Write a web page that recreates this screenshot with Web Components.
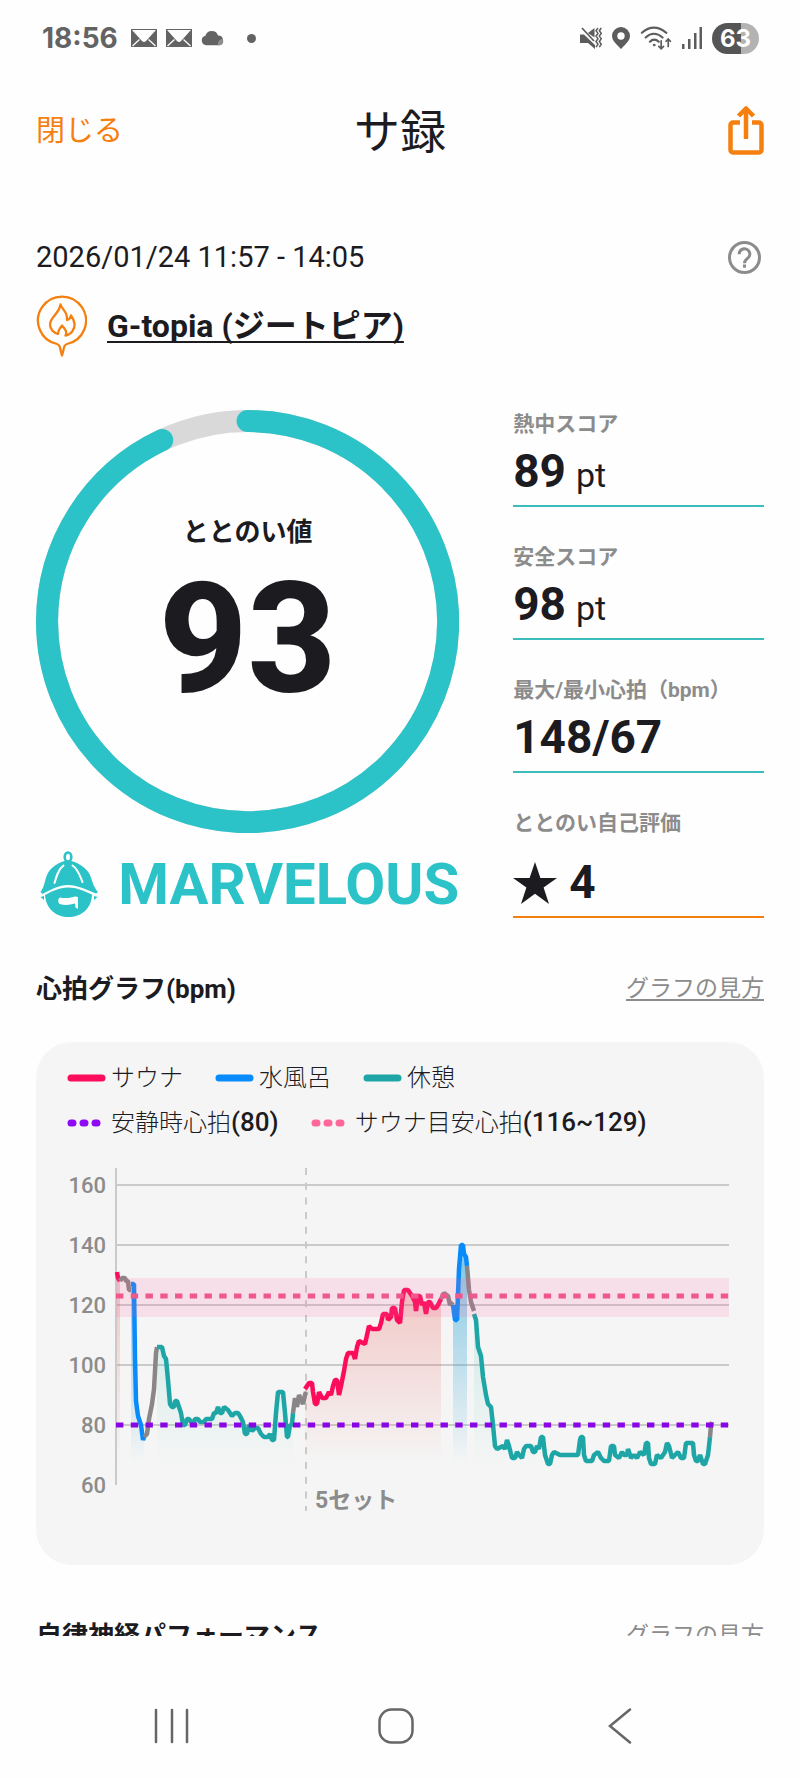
<!DOCTYPE html>
<html lang="ja">
<head>
<meta charset="utf-8">
<meta name="viewport" content="width=device-width, initial-scale=1">
<title>サ録</title>
<style>
  :root {
    --ink: #1c1b1f;
    --muted: #8c8c8c;
    --orange: #f57f0f;
    --teal: #2bc2c8;
    --card: #f5f5f5;
  }
  html, body { height: 100%; }
  body {
    margin: 0;
    background: #fefefe;
    color: var(--ink);
    font-family: Roboto, "Noto Sans CJK JP", sans-serif;
  }
</style>
</head>
<body>
<sa-app>
  <sa-status-bar slot="status" time="18:56" battery="63"></sa-status-bar>
  <sa-header slot="header" heading="サ録" close="閉じる"></sa-header>

  <sa-visit date="2026/01/24 11:57 - 14:05" href="#venue">G-topia (ジートピア)</sa-visit>

  <sa-score>
    <sa-ring slot="ring" value="93" label="ととのい値"></sa-ring>
    <sa-rank slot="ring">MARVELOUS</sa-rank>
    <sa-stat label="熱中スコア" unit="pt">89</sa-stat>
    <sa-stat label="安全スコア" unit="pt">98</sa-stat>
    <sa-stat label="最大/最小心拍（bpm）">148/67</sa-stat>
    <sa-stat label="ととのい自己評価" rating>4</sa-stat>
  </sa-score>

  <sa-section heading="心拍グラフ(bpm)" link="グラフの見方">
    <sa-card>
      <sa-legend>
        <sa-key color="#fb0d5c">サウナ</sa-key>
        <sa-key color="#0a8bfb">水風呂</sa-key>
        <sa-key color="#1ea5a6">休憩</sa-key>
      </sa-legend>
      <sa-legend>
        <sa-key color="#8f0af5" dotted>安静時心拍<b>(80)</b></sa-key>
        <sa-key color="#ff6699" dotted>サウナ目安心拍<b>(116~129)</b></sa-key>
      </sa-legend>
      <sa-chart></sa-chart>
    </sa-card>
  </sa-section>

  <sa-section heading="自律神経パフォーマンス" link="グラフの見方"></sa-section>

  <sa-nav-bar slot="nav"></sa-nav-bar>
</sa-app>

<script>
/** Base: renders `template()` into an open shadow root once connected. */
class SaElement extends HTMLElement {
  connectedCallback() {
    if (this.shadowRoot) return;
    this.attachShadow({ mode: 'open' }).innerHTML = this.template();
  }
  attr(name) {
    return this.getAttribute(name) || '';
  }
}

/** `<sa-app>` — full-height shell; the middle part is clipped above the nav. */
customElements.define('sa-app', class extends SaElement {
  template() {
    return `
<style>
  :host { display: flex; flex-direction: column; height: 100vh; }
  main { flex: 1; min-height: 0; overflow: hidden; padding: 0 36px; }
</style>
<slot name="status"></slot>
<slot name="header"></slot>
<main><slot></slot></main>
<slot name="nav"></slot>`;
  }
});

/** `<sa-status-bar time battery>` — phone status line. */
customElements.define('sa-status-bar', class extends SaElement {
  template() {
    const mail = `
<svg width="26" height="18" viewBox="0 0 26 18">
  <path fill="#636363" d="M0 0h26v18H0z"/>
  <path fill="#fefefe" d="M1 1h24L15 12q-2 2-4 0z"/>
  <path stroke="#fefefe" stroke-width="1.3" fill="none" d="M1.500 17l7-6.500M24.500 17l-7-6.500"/>
</svg>`;
    return `
<style>
  :host { display: flex; align-items: center; justify-content: space-between; height: 76px; padding: 0 41px 0 42px; color: #636363; }
  div { display: flex; align-items: center; }
  .left { gap: 9px; }
  .right { gap: 10px; }
  time { font: 700 28px/36px Inter, sans-serif; margin-right: 4px; }
  .dot { margin-left: 14px; }
  .battery {
    width: 47px; height: 31px; border-radius: 16px; justify-content: center;
    background: linear-gradient(90deg, #555 62%, #b3b3b3 62%);
    color: #fff; font: 700 24px/31px Inter, sans-serif;
  }
</style>
<div class="left">
  <time>${this.attr('time')}</time>
  ${mail}${mail}
  <svg width="23" height="16" viewBox="0 0 22 15"><path fill="#636363" d="M5 14.500a4.700 4.700 0 0 1-.8-9.200A6.400 6.400 0 0 1 16.300 5a4.800 4.800 0 0 1 1 9.500z"/><path fill="#8f8f8f" d="M16 14.500c0-4 2-6 4.700-6 1.600 3-.2 6-3.200 6z"/></svg>
  <svg class="dot" width="9" height="9" viewBox="0 0 9 9"><circle cx="4.500" cy="4.500" r="4.500" fill="#636363"/></svg>
</div>
<div class="right">
  <svg width="22" height="22" viewBox="0 0 22 22" fill="none" stroke="#5c5c5c" stroke-width="1.700">
    <path fill="#5c5c5c" stroke="none" d="M0 7.500h4L15 18v4l-7-6H0zM8 6l6.500-5v9.500z"/>
    <path d="M2 1l12 13"/>
    <path stroke-width="1.500" d="M18 1l-2 2.700 2 2.700-2 2.700 2 2.700-2 2.700 2 2.700-2 3M21.300 1l-2 2.700 2 2.700-2 2.700 2 2.700-2 2.700 2 2.700-2 3"/>
  </svg>
  <svg width="18" height="22" viewBox="0 0 18 22"><path fill="#5c5c5c" fill-rule="evenodd" d="M9 0a9 9 0 0 1 9 9c0 5-6 9.500-9 13C6 18.500 0 14 0 9a9 9 0 0 1 9-9zm0 5.300a3.700 3.700 0 1 0 0 7.400 3.700 3.700 0 0 0 0-7.400z"/></svg>
  <svg width="32" height="26" viewBox="0 0 34 26" fill="none" stroke="#5c5c5c" stroke-width="2.200" stroke-linecap="round">
    <path d="M2 7.500q12.500-11 26 0M6 12.500q8.500-8 18 0M10.500 17q4.500-4.500 9.500 0"/>
    <path stroke-width="1.800" d="M22.500 16v8.500M20 22l2.500 2.500L25 22M30 22v-8M27.700 16.500L30 14l2.300 2.500"/>
    <circle cx="15" cy="20.500" r="1" fill="#5c5c5c" stroke-width="1"/>
  </svg>
  <svg width="20" height="22" viewBox="0 0 20 22" fill="#5c5c5c"><path d="M0 17h2.500v5H0zM6 12h2.500v10H6zM12 6h2.500v16H12zM17.500 0H20v22h-2.500z"/></svg>
  <div class="battery">${this.attr('battery')}</div>
</div>`;
  }
});

/** `<sa-header heading close>` — close button, title and share button. */
customElements.define('sa-header', class extends SaElement {
  template() {
    return `
<style>
  :host { display: grid; grid-template-columns: 1fr auto 1fr; align-items: center; height: 108px; padding: 0 36px; }
  button { border: 0; padding: 0; background: none; color: var(--orange); font: 400 29px/40px Roboto, "Noto Sans CJK JP", sans-serif; justify-self: start; }
  .close { padding-top: 2px; }
  .share { justify-self: end; display: flex; }
  h1 { margin: 0; padding-top: 4px; font-size: 46px; line-height: 60px; font-weight: 400; }
</style>
<button class="close">${this.attr('close')}</button>
<h1>${this.attr('heading')}</h1>
<button class="share" aria-label="共有">
  <svg width="36" height="50" viewBox="0 0 36 50" fill="none" stroke="#f57f0f" stroke-width="4.500" stroke-linejoin="round">
    <path d="M12 17.500H5a2.500 2.500 0 0 0-2.500 2.500v25A2.500 2.500 0 0 0 5 47.500h26a2.500 2.500 0 0 0 2.500-2.500V20a2.500 2.500 0 0 0-2.500-2.500h-7"/>
    <path d="M18 34V4M10.500 11L18 3.500l7.500 7.500"/>
  </svg>
</button>`;
  }
});

/** `<sa-visit date href>` — visit time and the venue link (slotted text). */
customElements.define('sa-visit', class extends SaElement {
  template() {
    return `
<style>
  :host { display: block; padding-top: 53px; }
  div { display: flex; align-items: center; }
  .date { justify-content: space-between; height: 40px; font-size: 29px; line-height: 40px; }
  .venue { gap: 20px; height: 62px; margin-top: 18px; }
  button { display: flex; border: 0; padding: 0; margin-right: 2px; background: none; }
  a { color: inherit; font-size: 32px; line-height: 44px; font-weight: 700; text-underline-offset: 4px; text-decoration-thickness: 2px; text-decoration-skip-ink: none; }
</style>
<div class="date">
  <time>${this.attr('date')}</time>
  <button aria-label="ヘルプ">
    <svg width="35" height="35" viewBox="0 0 35 35" fill="none" stroke="#8c8c8c" stroke-width="3">
      <circle cx="17.500" cy="17.500" r="15"/>
      <path d="M12.200 14.200a5.300 5.300 0 1 1 8.600 4c-2.200 1.700-3.300 2.700-3.300 5"/>
      <path d="M17.500 24.500v3.200"/>
    </svg>
  </button>
</div>
<div class="venue">
  <svg width="51" height="62" viewBox="0 0 51 62" fill="none" stroke="#f57f0f" stroke-width="2.300" stroke-linejoin="round">
    <path d="M21 49A24 24 0 1 1 31 49Q28 50 27.500 55L26 60.500 24.500 55Q24 50 21 49z"/>
    <path d="M24.500 9.500c1.500 5 7.500 7.500 6.500 15.500 2.300-.5 3.500-2 4-4.500 4 5.500 5 10.500 1.500 15.500-1.500 2.500-4 4-7 4.500 2-3.500 0-6-3.500-10-1.500 2.500-3.500 3-4 8.500-4-1-8-4.500-8-9.500 0-7.500 9.500-11 10.500-20z"/>
  </svg>
  <a href="${this.attr('href')}"><slot></slot></a>
</div>`;
  }
});

/** `<sa-score>` — ring column on the left, stats on the right. */
customElements.define('sa-score', class extends SaElement {
  template() {
    return `
<style>
  :host { display: grid; grid-template-columns: 27fr 16fr; gap: 54px; margin-top: 53px; }
  div { display: flex; flex-direction: column; justify-content: space-between; }
</style>
<div><slot name="ring"></slot></div>
<div><slot></slot></div>`;
  }
});

/** `<sa-ring value label>` — progress ring, value out of 100. */
customElements.define('sa-ring', class extends SaElement {
  template() {
    return `
<style>
  :host { display: grid; place-items: center; aspect-ratio: 1; }
  svg, div { grid-area: 1 / 1; }
  svg { width: 100%; height: 100%; }
  div { text-align: center; }
  p { margin: 0; font-size: 26px; line-height: 36px; font-weight: 700; }
  strong { display: block; font-size: 154px; line-height: 180px; font-weight: 800; }
</style>
<svg viewBox="0 0 422 422" fill="none" stroke-width="22">
  <circle cx="211" cy="211" r="200" stroke="#d9d9d9"/>
  <circle cx="211" cy="211" r="200" stroke="#2bc2c8" stroke-linecap="round" pathLength="100" stroke-dasharray="${this.attr('value')} 100" transform="rotate(-90 211 211)"/>
</svg>
<div>
  <p>${this.attr('label')}</p>
  <strong>${this.attr('value')}</strong>
</div>`;
  }
});

/** `<sa-rank>` — sauna-hat mascot and rank name. */
customElements.define('sa-rank', class extends SaElement {
  template() {
    return `
<style>
  :host { display: flex; align-items: center; justify-content: space-between; height: 68px; margin-top: 17px; color: var(--teal); font-size: 58px; line-height: 68px; font-weight: 700; }
  svg { margin-left: 4px; }
</style>
<svg width="58" height="67" viewBox="0 0 58 67" fill="none">
  <ellipse cx="28" cy="6" rx="3.300" ry="4.500" stroke="#2bc2c8" stroke-width="2.600"/>
  <path fill="#2bc2c8" d="M28 9.500C37 10.500 46 16 50 24c2.500 6 3 11.500 8 17l-2 1.500C46 38.500 37 34 28 34S11 38.500 2.500 43L.5 41C4.500 36 4.500 30 7 24c3.500-8 12-13.500 21-14.500z"/>
  <path fill="#2bc2c8" d="M28 36.500c9 0 16 3.500 24 7C51.500 58 41 66 28.500 66S6 58 5 44C12 40.500 19 36.500 28 36.500z"/>
  <path stroke="#fefefe" stroke-width="2" stroke-linecap="round" d="M23.500 14.500C18.500 18 16.500 25 14.500 32M32.500 14.500C38 18 40 25 42.500 31"/>
  <path fill="#fefefe" d="M20 46.500c5 1 10 .5 14-.8 2-.4 3 0 4 .3V58l-2.500-1.500-.5-4c-5 1.500-10 2-15.500.5-2-2.500-1.500-5.500.5-6.500z"/>
  <path fill="#2bc2c8" d="M.5 46l3.500-1v4zM57.500 46L54 45v4z"/>
</svg>
<slot></slot>`;
  }
});

/**
 * `<sa-stat label unit rating>` — labelled value with an underline.
 * With `rating` it gets a star and the orange line.
 */
customElements.define('sa-stat', class extends SaElement {
  template() {
    const star = `<svg width="44" height="42" viewBox="0 0 44 42"><path fill="#1c1b1f" d="M22 0l5.400 16H44L30.600 25.500 36 42 22 31.800 8 42l5.400-16.500L0 16h16.600z"/></svg>`;
    return `
<style>
  :host { display: block; border-bottom: 2px solid #3dbcbc; }
  :host([rating]) { border-color: var(--orange); }
  .label { font-size: 21px; line-height: 28px; font-weight: 700; color: var(--muted); white-space: nowrap; }
  .value { display: flex; align-items: baseline; gap: 10px; height: 67px; font-size: 46px; line-height: 67px; font-weight: 700; }
  small { font-size: 34px; font-weight: 400; }
  :host([rating]) .value { align-items: center; padding-top: 12px; gap: 12px; }
</style>
<div class="label">${this.attr('label')}</div>
<div class="value">${this.hasAttribute('rating') ? star : ''}<slot></slot>${this.attr('unit') ? `<small>${this.attr('unit')}</small>` : ''}</div>`;
  }
});

/** `<sa-section heading link>` — heading row above slotted content. */
customElements.define('sa-section', class extends SaElement {
  template() {
    return `
<style>
  :host { display: block; margin-top: 51px; }
  header { display: flex; align-items: center; justify-content: space-between; height: 40px; margin-bottom: 33px; }
  h2 { margin: 0; font-size: 26px; line-height: 40px; font-weight: 700; }
  a { color: var(--muted); font-size: 23px; line-height: 40px; font-weight: 400; text-underline-offset: 3px; text-decoration-thickness: 2px; text-decoration-skip-ink: none; }
</style>
<header>
  <h2>${this.attr('heading')}</h2>
  <a href="#help">${this.attr('link')}</a>
</header>
<slot></slot>`;
  }
});

customElements.define('sa-card', class extends SaElement {
  template() {
    return `
<style>
  :host { display: flex; flex-direction: column; gap: 8px; padding: 18px 30px 48px; border-radius: 36px; background: var(--card); }
</style>
<slot></slot>`;
  }
});

customElements.define('sa-legend', class extends SaElement {
  template() {
    return `
<style>:host { display: flex; gap: 31px; }</style>
<slot></slot>`;
  }
});

/** `<sa-key color dotted>` — one legend entry. */
customElements.define('sa-key', class extends SaElement {
  template() {
    const dash = this.hasAttribute('dotted')
      ? '<path d="M5 4h2M17 4h2M29 4h2"/>'
      : '<path d="M5 4h31"/>';
    const w = this.hasAttribute('dotted') ? 36 : 40;
    return `
<style>
  :host { display: flex; align-items: center; gap: 5px; font-size: 24px; line-height: 36px; font-weight: 300; }
  :host([dotted]) { gap: 9px; }
  ::slotted(b) { font-size: 26px; font-weight: 500; }
</style>
<svg width="${w}" height="8" viewBox="0 0 ${w} 8" stroke="${this.attr('color')}" stroke-width="7" stroke-linecap="round">${dash}</svg>
<span><slot></slot></span>`;
  }
});

// ── Chart ────────────────────────────────────────────────────────────────

const COLORS = { sauna: '#fb0d5c', water: '#0a8bfb', rest: '#1ea5a6', move: '#8a8587' };

// Each run: kind followed by "time,bpm" samples.
const RUNS = [
  ['sauna', '1,131 2,129 4,128'],
  ['move', '4,128 6,129 9,129 10,128 12,128 13,125 15,125'],
  ['water', '15,127 18,127 19,102 20,88 22,83 25,80 27,75 28,76'],
  ['move', '28,76 31,77 33,82 36,87 38,92 40,104 41,106'],
  ['rest', '41,106 46,106 48,103 50,102 52,95 54,87 56,86 58,86 59,88 61,88 63,86 65,84 67,80 69,80 71,82 73,82 75,81 78,81 79,82 82,82 84,81 88,81 90,82 96,82 98,84 100,84 102,86 104,84 106,84 108,86 112,85 114,84 116,83 119,84 122,84 124,83 127,81 129,77 131,77 133,80 136,78 139,79 142,79 145,77 148,76 152,76 154,77 156,75 158,75 160,84 162,91 167,91 169,84 171,76 172,76 174,80 176,80 177,84'],
  ['move', '177,84 179,89 181,86 183,90 187,87 189,90 190,91'],
  ['sauna', '189,92 193,94 196,94 197,91 199,87 201,87 203,91 206,89 210,89 213,91 215,90 217,93 219,95 221,95 223,90 225,93 228,98 230,102 232,104 237,104 239,102 241,106 243,108 249,107 251,110 253,113 256,112 263,112 265,114 267,117 271,117 272,115 275,116 276,119 279,119 281,115 284,114 286,121 288,125 292,125 296,123 299,121 300,118 302,123 304,123 306,120 308,121 310,117 312,121 314,121 317,119 320,119 322,120 325,122'],
  ['move', '325,122 328,124 332,123 334,120 337,121'],
  ['water', '337,120 339,115 341,115 343,132 345,140 347,140 348,137 350,136 351,133'],
  ['move', '351,133 353,125 355,121 358,118'],
  ['rest', '358,117 360,115 362,106 365,103 367,96 370,90 372,87 375,86 377,80 379,73 381,72 387,73 389,72 391,75 393,73 396,69 399,69 401,71 403,70 406,69 408,72 410,73 415,73 417,71 419,71 421,73 423,72 425,76 427,76 429,70 432,67 434,67 436,70 438,71 444,70 462,70 464,75 465,76 467,76 468,70 470,68 476,68 478,70 482,71 485,69 488,68 493,68 495,73 498,73 499,70 503,69 506,71 508,70 511,70 512,72 515,69 518,70 521,69 524,71 528,70 530,74 532,74 533,69 535,67 539,67 541,70 545,69 549,71 551,74 553,73 556,69 559,70 562,71 565,69 568,69 570,74 577,74 578,70 580,68 582,68 584,70 587,67 589,67 591,69 592,70 594,76'],
  ['move', '594,76 595,80 596,81'],
];

/** `<sa-chart>` — heart-rate line over the visit. */
customElements.define('sa-chart', class extends SaElement {
  template() {
    const X0 = 50, X1 = 663;
    const y = (bpm) => 324 - (bpm - 60) * 3;
    const grid = [160, 140, 120, 100, 80].map((v) =>
      `<path d="M${X0} ${y(v)}H${X1}"/>`).join('');
    const labels = [160, 140, 120, 100, 80, 60].map((v) =>
      `<text x="40" y="${y(v) + 8}" text-anchor="end">${v}</text>`).join('');
    let lines = '';
    let areas = '';
    for (const [kind, samples] of RUNS) {
      const pts = samples.split(' ').map((s) => {
        const [t, bpm] = s.split(',').map(Number);
        return [X0 + t, y(bpm)];
      });
      const line = pts.map((p) => p.join(' ')).join('L');
      lines += `<path d="M${line}" stroke="${COLORS[kind]}"/>`;
      if (kind !== 'move') {
        const end = y(67);
        areas += `<path fill="url(#${kind})" d="M${pts[0][0]} ${end}L${line}V${end}z"/>`;
      }
    }
    const fade = (id, color, top) => `
  <linearGradient id="${id}" gradientUnits="userSpaceOnUse" x1="0" x2="0" y1="${y(140)}" y2="${y(67)}">
    <stop stop-color="${color}" stop-opacity="${top}"/>
    <stop offset="1" stop-color="${color}" stop-opacity="0"/>
  </linearGradient>`;
    return `
<style>
  :host { display: block; margin-top: 12px; }
  svg { display: block; width: 100%; height: auto; overflow: visible; }
  text { font-size: 22px; font-weight: 500; fill: #8c8c8c; }
  .set { font-size: 23px; font-weight: 700; }
</style>
<svg viewBox="0 0 668 356" fill="none" role="img" aria-label="心拍グラフ">
  <defs>${fade('sauna', '#e8554f', .35)}${fade('water', '#2fa5d6', .6)}${fade('rest', '#5cd0c0', .35)}</defs>
  <g stroke="#cacaca" stroke-width="2">${grid}<path d="M${X0} 7V324"/><path d="M240 7V350" stroke-dasharray="7 7.700"/></g>
  ${areas}
  <g stroke-width="4.500" stroke-linejoin="bevel">${lines}</g>
  <path fill="#ff5c9a" fill-opacity=".14" d="M${X0} ${y(129)}H${X1}V${y(116)}H${X0}z"/>
  <path d="M${X0} 135H${X1}" stroke="#f0588c" stroke-width="5" stroke-dasharray="7.400 7.350"/>
  <path d="M${X0} ${y(80)}H${X1}" stroke="#8a05e6" stroke-width="5" stroke-dasharray="7.400 7.350"/>
  ${labels}
  <text class="set" x="249" y="347">5セット</text>
</svg>`;
  }
});

/** `<sa-nav-bar>` — recents, home, back. */
customElements.define('sa-nav-bar', class extends SaElement {
  template() {
    return `
<style>
  :host { display: grid; grid-template-columns: repeat(3, 1fr); align-items: center; justify-items: center; height: 104px; padding: 38px 68px 0 60px; }
  button { display: flex; border: 0; padding: 0; background: none; }
  svg { fill: none; stroke: #666; stroke-width: 2.500; stroke-linecap: round; }
</style>
<button aria-label="履歴"><svg width="36" height="36" viewBox="0 0 36 36"><path d="M2 2v32M18 2v32M33 2v32"/></svg></button>
<button aria-label="ホーム"><svg width="36" height="36" viewBox="0 0 36 36"><rect x="1.500" y="1.500" width="33" height="33" rx="12"/></svg></button>
<button aria-label="戻る"><svg width="36" height="36" viewBox="0 0 36 36"><path d="M28 1.500L8 18l20 16.500"/></svg></button>`;
  }
});
</script>
</body>
</html>
